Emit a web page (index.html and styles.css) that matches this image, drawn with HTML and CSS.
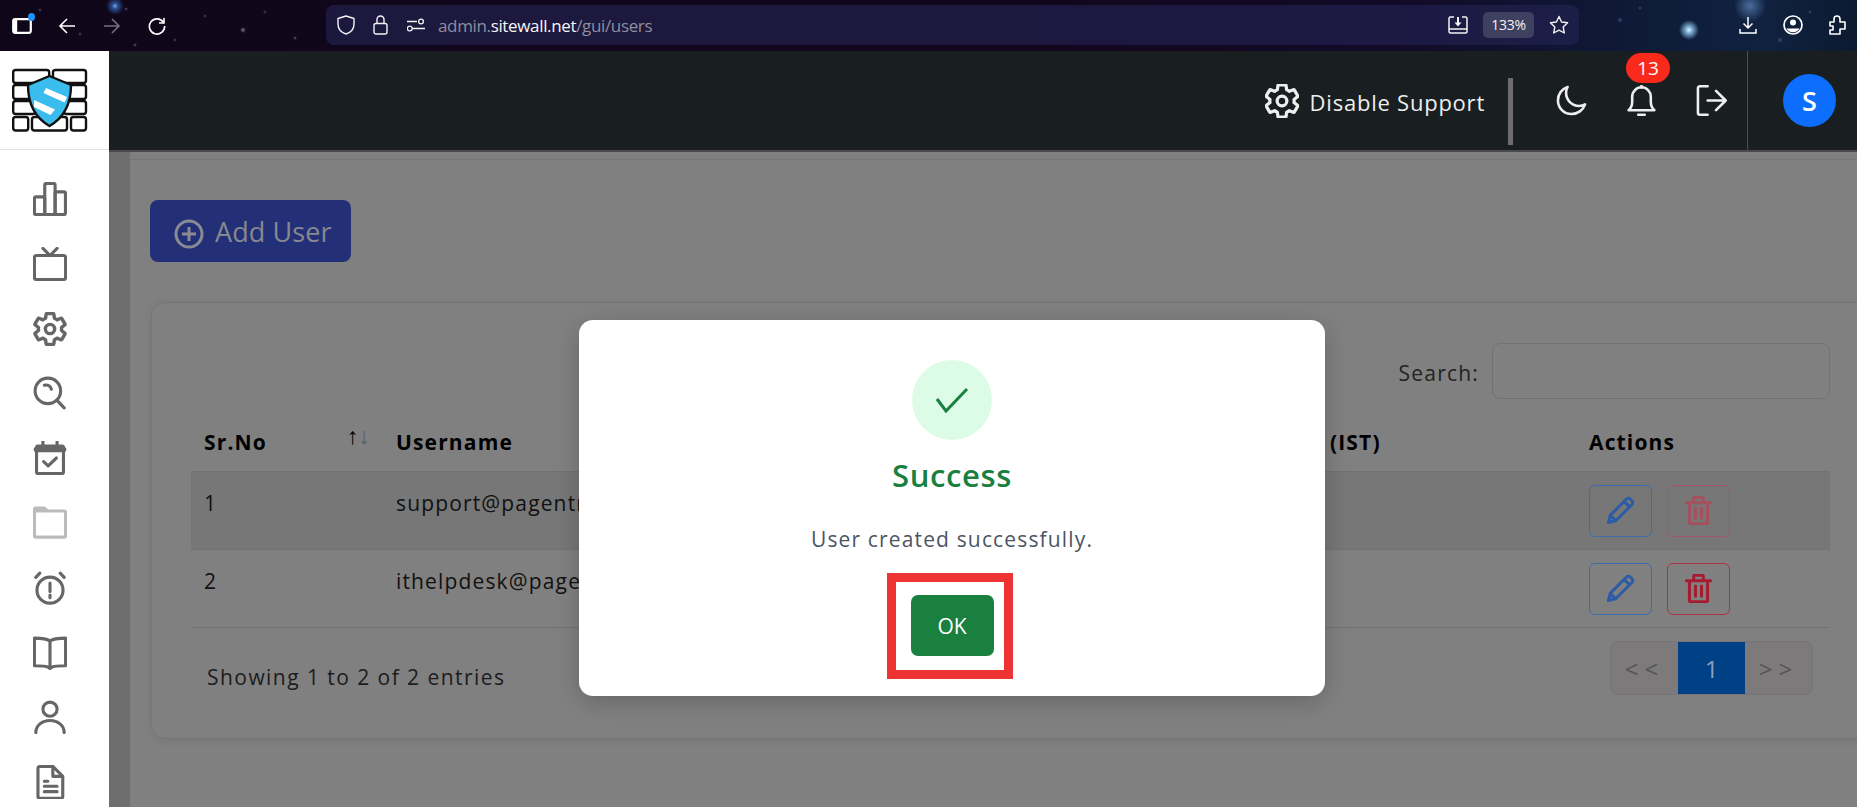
FILE: index.html
```html
<!DOCTYPE html>
<html lang="en">
<head>
  <meta charset="UTF-8" />
  <title>Users</title>
  <link rel="stylesheet" href="styles.css">
</head>
<body>
  <!-- Browser chrome -->
  <div class="chrome">
    <div class="tab-icon">
      <svg width="20" height="16" viewBox="0 0 20 16"><rect x="1.2" y="1.2" width="17.6" height="13.6" rx="2" fill="none" stroke="#fff" stroke-width="2.2"/><rect x="1.2" y="1.2" width="4" height="13.6" fill="#fff"/></svg>
      <span class="tab-dot"></span>
    </div>
    <svg class="nav-back" width="18" height="18" viewBox="0 0 18 18" fill="none" stroke="#fff" stroke-width="1.6"><path d="M17 9H2M9 2 2 9l7 7"/></svg>
    <svg class="nav-fwd" width="18" height="18" viewBox="0 0 18 18" fill="none" stroke="#76707c" stroke-width="1.6"><path d="M1 9h15M9 2l7 7-7 7"/></svg>
    <svg class="nav-reload" width="18" height="18" viewBox="0 0 18 18" fill="none" stroke="#fff" stroke-width="1.6"><path d="M15.5 5.5A7.6 7.6 0 1 0 16.600 9"/><path d="M16 1v5h-5" /></svg>

    <div class="urlbar">
      <svg width="18" height="20" viewBox="0 0 18 20" fill="none" stroke="#f2f2f2" stroke-width="1.4"><path d="M9 1 17 3.500V9c0 5-3.500 8.500-8 10C4.500 17.500 1 14 1 9V3.500z" stroke-linejoin="round"/></svg>
      <svg class="url-lock" width="15" height="20" viewBox="0 0 15 20" fill="none" stroke="#f2f2f2" stroke-width="1.4"><rect x="1" y="8.500" width="13" height="10.500" rx="2"/><path d="M4 8.500V4.500a3.500 3.500 0 0 1 7 0v4"/></svg>
      <svg class="url-tune" width="18" height="14" viewBox="0 0 18 14" fill="none" stroke="#f2f2f2" stroke-width="1.3"><path d="M0 3.500h10M5 10.500h13"/><circle cx="14" cy="3.500" r="2.400"/><circle cx="2.800" cy="10.500" r="2.400"/></svg>
      <div class="url-text">admin.<b>sitewall.net</b>/gui/users</div>
      <div class="url-right">
        <svg width="20" height="18" viewBox="0 0 20 18" fill="none" stroke="#f2f2f2" stroke-width="1.5"><path d="M6 1H2.500A1.500 1.500 0 0 0 1 2.500v13A1.500 1.500 0 0 0 2.500 17h15a1.500 1.500 0 0 0 1.500-1.500v-13A1.500 1.500 0 0 0 17.500 1H14M1 13h18"/><path d="M10 1v8" stroke-width="2"/><path d="M6.500 6.500h7L10 10.500z" fill="#f2f2f2" stroke="none"/></svg>
        <div class="zoom-pill">133%</div>
        <svg width="20" height="20" viewBox="0 0 20 20" fill="none" stroke="#f2f2f2" stroke-width="1.4" stroke-linejoin="round"><path d="m10 1.500 2.600 5.500 6 .8-4.400 4.200 1.100 6L10 15.100 4.700 18l1.100-6L1.400 7.800l6-.8z"/></svg>
      </div>
    </div>

    <div class="chrome-right">
      <svg width="18" height="18" viewBox="0 0 18 18" fill="none" stroke="#fff" stroke-width="1.5"><path d="M9 1v11M4.500 7.500 9 12l4.500-4.500M1 13v4h16v-4"/></svg>
      <svg width="20" height="20" viewBox="0 0 20 20" fill="none" stroke="#fff" stroke-width="1.700"><circle cx="10" cy="10" r="9"/><circle cx="10" cy="7.500" r="3" fill="#fff" stroke="none"/><path d="M3.500 13.500h13a7.500 7.500 0 0 1-13 0z" fill="#fff" stroke="none"/></svg>
      <svg width="17" height="20" viewBox="0 0 17 20" fill="none" stroke="#fff" stroke-width="1.600" stroke-linejoin="round"><path d="M1 7h4V4a3 3 0 0 1 6 0v3h5v7h-5v5H1v-4h3v-4H1z"/></svg>
    </div>
  </div>

  <div class="app">
    <!-- Sidebar -->
    <aside class="sidebar">
      <div class="logo">
        <svg width="76" height="64" viewBox="13 68 76 64" fill="#fff" stroke="#111" stroke-width="2.400">
          <rect x="14.200" y="70" width="36" height="13" rx="2.500"/>
          <rect x="54" y="70" width="33" height="13" rx="2.500"/>
          <rect x="14.200" y="85" width="17" height="14" rx="2.500"/>
          <rect x="69" y="85" width="18" height="14" rx="2.500"/>
          <rect x="14.200" y="101" width="22" height="13" rx="2.500"/>
          <rect x="65" y="101" width="22" height="13" rx="2.500"/>
          <rect x="14.200" y="117" width="15" height="13.500" rx="2.500"/>
          <rect x="33" y="117" width="35" height="13.500" rx="2.500"/>
          <rect x="72" y="117" width="15" height="13.500" rx="2.500"/>
          <path d="M50.500 76 72 85c0 18-6 32-21.500 41C35 117 29 103 29 85z" fill="#3bbcef" stroke-width="2.400"/>
          <path d="M47 88 68 97l-2.500 5.500L44.500 93zM35 100l21 9.500-4.500 5.500-16.500-8z" stroke="none"/>
        </svg>
      </div>
      <nav class="side-nav">
        <svg class="side-icon" viewBox="0 0 24 24"><rect x="1" y="10.500" width="7.300" height="12.500" rx="1"/><rect x="8.300" y="1" width="7.300" height="22" rx="1"/><rect x="15.600" y="7" width="7.300" height="16" rx="1"/></svg>
        <svg class="side-icon" viewBox="0 0 24 24"><rect x="1" y="6" width="22" height="17" rx="1.500"/><path d="M7 1l5 5 5-5"/></svg>
        <svg class="side-icon" viewBox="1 1 22 22"><path d="M19.430 12.980c.04-.32.07-.64.07-.98s-.03-.66-.07-.98l2.110-1.650c.19-.15.24-.42.12-.64l-2-3.460c-.12-.22-.39-.3-.61-.22l-2.490 1c-.52-.4-1.080-.73-1.690-.98l-.38-2.650C14.460 2.180 14.250 2 14 2h-4c-.25 0-.46.18-.49.42l-.38 2.650c-.61.25-1.170.59-1.690.98l-2.490-1c-.23-.09-.49 0-.61.22l-2 3.460c-.13.22-.07.49.12.64l2.110 1.650c-.04.32-.07.65-.07.98s.03.66.07.98l-2.110 1.650c-.19.15-.24.42-.12.64l2 3.460c.12.22.39.3.61.22l2.490-1c.52.4 1.080.73 1.690.98l.38 2.650c.03.24.24.42.49.42h4c.25 0 .46-.18.49-.42l.38-2.650c.61-.25 1.170-.59 1.690-.98l2.490 1c.23.09.49 0 .61-.22l2-3.460c.12-.22.07-.49-.12-.64z"/><circle cx="12" cy="12" r="3"/></svg>
        <svg class="side-icon" viewBox="0 0 24 24"><circle cx="10.500" cy="10.500" r="9"/><path d="M16.800 17 22 22.500M8 6.500c2.300-.6 4.300.6 5 2.800"/></svg>
        <svg class="side-icon" viewBox="0 0 24 24"><rect x="2.500" y="3.500" width="19" height="19.500" rx="1"/><path d="M2.500 6h19" stroke-width="4"/><path d="M7 0v4M17 0v4"/><path d="m7.500 14.500 3.200 3 5.800-5.500"/></svg>
        <svg class="side-icon is-muted" viewBox="0 0 24 24"><path d="M1 2.500a1 1 0 0 1 1-1h6l2 2h12a1 1 0 0 1 1 1V21a1 1 0 0 1-1 1H2a1 1 0 0 1-1-1z"/><path d="M1 3h8" stroke-width="3"/></svg>
        <svg class="side-icon" viewBox="0 0 24 24"><circle cx="12" cy="13.500" r="9.200"/><path d="M2 4.500 4.800 1.500M22 4.500l-2.800-3M12 8.500v6M12 17v1.800"/></svg>
        <svg class="side-icon" viewBox="0 0 24 24"><path d="M12 4v18.500M12 3.500c-2-1.500-6-2-11-2V21c4 0 8 0 10 1.200l1 .8 1-.8c2-1.200 6-1.200 10-1.200V1.500c-5 0-9 .5-11 2z"/></svg>
        <svg class="side-icon" viewBox="0 0 24 24"><circle cx="12" cy="6.500" r="5"/><path d="M2 23c0-5 4.500-8.500 10-8.500S22 18 22 23"/></svg>
        <svg class="side-icon" viewBox="0 0 24 24"><path d="M3.500 2.500A1.500 1.500 0 0 1 5 1h9l7 7v14a1.500 1.500 0 0 1-1.500 1.500H5A1.500 1.500 0 0 1 3.500 22z"/><path d="M14 1v7h7M8 11.500h2.500M8 15h9M8 18.800h9"/></svg>
      </nav>
    </aside>

    <div class="right-col">
      <!-- Top bar -->
      <header class="topbar">
        <svg class="top-gear" viewBox="1.500 1.500 21 21"><path d="M19.430 12.980c.04-.32.07-.64.07-.98s-.03-.66-.07-.98l2.110-1.650c.19-.15.24-.42.12-.64l-2-3.460c-.12-.22-.39-.3-.61-.22l-2.490 1c-.52-.4-1.080-.73-1.690-.98l-.38-2.650C14.460 2.180 14.250 2 14 2h-4c-.25 0-.46.18-.49.42l-.38 2.650c-.61.25-1.170.59-1.690.98l-2.490-1c-.23-.09-.49 0-.61.22l-2 3.460c-.13.22-.07.49.12.64l2.110 1.650c-.04.32-.07.65-.07.98s.03.66.07.98l-2.110 1.650c-.19.15-.24.42-.12.64l2 3.460c.12.22.39.3.61.22l2.490-1c.52.4 1.080.73 1.690.98l.38 2.650c.03.24.24.42.49.42h4c.25 0 .46-.18.49-.42l.38-2.650c.61-.25 1.170-.59 1.690-.98l2.490 1c.23.09.49 0 .61-.22l2-3.460c.12-.22.07-.49-.12-.64z"/><circle cx="12" cy="12" r="3"/></svg>
        <span class="support-text">Disable Support</span>
        <span class="top-sep"></span>
        <svg class="top-icon moon" viewBox="0 0 24 24"><path d="M9 1.500C4.500 3 1.500 7.200 1.500 12c0 5.800 4.700 10.500 10.500 10.500 4.800 0 9-3 10.500-7.500-1.500.9-3 1.200-4.500 1.200-5.800 0-10.200-4.500-10.200-10.200 0-1.500.3-3 1.200-4.500z"/></svg>
        <div class="bell-wrap">
          <svg class="top-icon" viewBox="0 0 24 24"><path d="M2 19.500c1.800-1.500 2.800-3.500 2.800-6.500V9a7.200 7.200 0 0 1 14.400 0v4c0 3 1 5 2.800 6.500z"/><path d="M12 .5v1.500M9.500 23h5" /></svg>
          <span class="badge">13</span>
        </div>
        <svg class="top-icon logout" viewBox="0 0 24 24"><path d="M9 1H3a1.500 1.500 0 0 0-1.500 1.500v19A1.500 1.500 0 0 0 3 23h6M9 12h14M15.500 4.500 23 12l-7.500 7.500"/></svg>
        <span class="top-vline"></span>
        <div class="avatar">S</div>
      </header>

      <!-- Main content -->
      <main class="content">
        <div class="panel">
          <button class="add-btn">
            <svg width="30" height="30" viewBox="0 0 30 30" fill="none" stroke="#8a8b92" stroke-width="3"><circle cx="15" cy="15" r="13"/><path d="M15 8v14M8 15h14"/></svg>
            Add User
          </button>

          <section class="card">
            <div class="search-row">
              <label class="search-label">Search:</label>
              <input class="search-input" type="text">
            </div>
            <table class="users">
              <colgroup><col class="c1"><col class="c2"><col class="c3"><col class="c4"></colgroup>
              <thead>
                <tr>
                  <th><div class="sort-cell">Sr.No <span class="sort"><span>↑</span><i>↓</i></span></div></th>
                  <th>Username</th>
                  <th>Created At (IST)</th>
                  <th>Actions</th>
                </tr>
              </thead>
              <tbody>
                <tr class="odd">
                  <td>1</td>
                  <td>support@pagentra.com</td>
                  <td></td>
                  <td class="actions">
                    <button class="act edit"><svg viewBox="0 0 24 24"><path d="M2 22l1.500-6L17 2.500a2.100 2.100 0 0 1 3 0l1.500 1.500a2.100 2.100 0 0 1 0 3L8 20.500zM3.500 16 8 20.500M15 4.500l4.500 4.500"/></svg></button>
                    <button class="act del faded"><svg viewBox="0 0 24 24"><path d="M2 5.500h20M8 5.500V2a1 1 0 0 1 1-1h6a1 1 0 0 1 1 1v3.500M4.500 5.500V22a1 1 0 0 0 1 1h13a1 1 0 0 0 1-1V5.500M9.500 10v8.500M14.500 10v8.500"/></svg></button>
                  </td>
                </tr>
                <tr>
                  <td>2</td>
                  <td>ithelpdesk@pagentra.com</td>
                  <td></td>
                  <td class="actions">
                    <button class="act edit"><svg viewBox="0 0 24 24"><path d="M2 22l1.500-6L17 2.500a2.100 2.100 0 0 1 3 0l1.500 1.500a2.100 2.100 0 0 1 0 3L8 20.500zM3.500 16 8 20.500M15 4.500l4.500 4.500"/></svg></button>
                    <button class="act del"><svg viewBox="0 0 24 24"><path d="M2 5.500h20M8 5.500V2a1 1 0 0 1 1-1h6a1 1 0 0 1 1 1v3.500M4.500 5.500V22a1 1 0 0 0 1 1h13a1 1 0 0 0 1-1V5.500M9.500 10v8.500M14.500 10v8.500"/></svg></button>
                  </td>
                </tr>
              </tbody>
            </table>
            <div class="table-foot">
              <div class="showing">Showing 1 to 2 of 2 entries</div>
              <div class="pager">
                <span class="page">&lt;&lt;</span>
                <span class="page current">1</span>
                <span class="page">&gt;&gt;</span>
              </div>
            </div>
          </section>
        </div>

        <!-- Success dialog -->
        <div class="dialog">
          <div class="ok-circle">
            <svg width="34" height="26" viewBox="0 0 34 26" fill="none" stroke="#198040" stroke-width="3"><path d="M2 12l9 12L32 2"/></svg>
          </div>
          <h2 class="dialog-title">Success</h2>
          <p class="dialog-text">User created successfully.</p>
          <button class="ok-btn">OK</button>
          <div class="red-mark"></div>
        </div>
      </main>
    </div>
  </div>
</body>
</html>
```

FILE: styles.css
```css
html, body { margin:0; padding:0; height:100%; }
body {
  display:flex;
  flex-direction:column;
  height:100vh;
  overflow:hidden;
  font-family:"Open Sans", "Noto Sans", sans-serif;
  color:#161616;
  background:#808080;
}

/* Browser chrome */
.chrome {
  position:relative;
  flex:0 0 51px;
  display:flex;
  align-items:center;
  box-sizing:border-box;
  padding-left:12px;
  background:
    radial-gradient(circle at 115px 6px, #6fa8ee 0, #2a4a8a 3px, transparent 9px),
    radial-gradient(circle at 243px 30px, #7a7488 0, transparent 3px),
    radial-gradient(circle at 126px 9px, #55506a 0, transparent 2px),
    radial-gradient(circle at 80px 34px, #4a4558 0, transparent 2px),
    radial-gradient(circle at 40px 10px, #4a4558 0, transparent 2px),
    radial-gradient(circle at 205px 16px, #4a4558 0, transparent 2px),
    radial-gradient(circle at 265px 12px, #4a4558 0, transparent 2px),
    radial-gradient(circle at 295px 38px, #5a5568 0, transparent 2px),
    radial-gradient(circle at 175px 40px, #4a4558 0, transparent 2px),
    radial-gradient(circle at 135px 45px, #5a5568 0, transparent 2px),
    radial-gradient(circle at 1689px 30px, #e8f4ff 0, #7fb4d8 3px, transparent 10px),
    radial-gradient(circle at 1750px 6px, #4a6c9c 0, transparent 16px),
    radial-gradient(circle at 1620px 20px, #3a4a6a 0, transparent 3px),
    radial-gradient(circle at 1640px 8px, #3a4a6a 0, transparent 2px),
    radial-gradient(circle at 1780px 40px, #3a4a6a 0, transparent 3px),
    radial-gradient(circle at 1810px 12px, #3a4a6a 0, transparent 2px),
    linear-gradient(90deg, #10061a 0, #12061c 55%, #120a28 75%, #0e1a38 88%, #102240 95%, #0c1a30 100%);
}
.tab-icon { position:relative; width:20px; height:16px; display:flex; }
.tab-dot {
  position:absolute;
  top:-5px; right:-3px;
  width:7px; height:8px;
  border-radius:50%;
  background:#1e90ff;
}
.nav-back { margin-left:26px; }
.nav-fwd { margin-left:27px; }
.nav-reload { margin-left:27px; }
.urlbar {
  flex:none;
  display:flex;
  align-items:center;
  box-sizing:border-box;
  width:1253px;
  height:40px;
  margin:0 0 1px 160px;
  padding-left:11px;
  border-radius:8px;
  background:rgba(36,36,84,.62);
}
.url-lock { margin-left:18px; }
.url-tune { margin-left:19px; }
.url-text {
  margin-left:13px;
  font-size:17px;
  letter-spacing:-.35px;
  color:#8f8e9e;
}
.url-text b { font-weight:400; color:#f5f5f5; }
.url-right {
  margin-left:auto;
  display:flex;
  align-items:center;
  padding-right:10px;
}
.zoom-pill {
  width:51px; height:26px;
  margin:0 15px;
  line-height:26px;
  text-align:center;
  font-size:14px;
  letter-spacing:-.3px;
  color:#f2f2f2;
  border-radius:5px;
  background:#3e4060;
}
.chrome-right {
  position:absolute;
  top:15px; right:11px;
  display:flex;
  align-items:center;
  gap:26px;
}

/* App frame */
.app { flex:1; display:flex; min-height:0; }
.sidebar { flex:0 0 109px; background:#fff; overflow:hidden; }
.logo {
  height:99px;
  box-sizing:border-box;
  padding:17px 0 0 12px;
  border-bottom:1px solid #e2e2e2;
}
.logo svg { display:block; }
.side-nav {
  display:flex;
  flex-direction:column;
  padding:32px 0 0 33px;
  gap:30.800px;
}
.side-icon {
  flex:none;
  width:34px; height:34px;
  fill:none;
  stroke:#666;
  stroke-width:2.200;
  stroke-linejoin:round;
  stroke-linecap:round;
}
.side-icon.is-muted { stroke:#bbb; }
.right-col { flex:1; min-width:0; display:flex; flex-direction:column; }

/* Top bar */
.topbar {
  flex:0 0 100px;
  box-sizing:border-box;
  display:flex;
  align-items:center;
  justify-content:flex-end;
  padding-right:21px;
  background:#191e20;
  border-bottom:2px solid #4a4a4a;
  color:#eee;
}
.top-gear, .top-icon {
  flex:none;
  fill:none;
  stroke:#eee;
  stroke-width:2;
  stroke-linejoin:round;
  stroke-linecap:round;
}
.top-gear { width:34px; height:34px; margin-right:11px; }
.top-icon { width:31px; height:31px; display:block; }
.support-text { margin-top:2px; font-size:22px; letter-spacing:.77px; white-space:nowrap; }
.top-sep {
  align-self:flex-end;
  width:5px; height:67px;
  margin:0 43px 5px 23px;
  background:#6d6d6d;
}
.bell-wrap { position:relative; margin:0 39px 0 39px; }
.badge {
  position:absolute;
  top:-32px; left:0;
  width:44px; height:30px;
  line-height:30px;
  text-align:center;
  font-size:19px;
  color:#fff;
  border-radius:15px;
  background:#f92a1c;
}
.top-vline { width:1px; height:99px; margin:0 35px 0 20px; background:#4a4f51; }
.avatar {
  width:53px; height:53px;
  line-height:53px;
  text-align:center;
  font-size:27px;
  font-weight:600;
  color:#fff;
  border-radius:50%;
  background:#0d6efd;
}

/* Content */
.content {
  position:relative;
  flex:1;
  min-height:0;
  overflow:hidden;
  background:linear-gradient(90deg, #6e6e6e 21px, #808080 21px);
  padding-left:21px;
}
.panel {
  height:100%;
  margin-top:7px;
  box-sizing:border-box;
  padding:40px 0 0 20px;
  border-top:1px solid #757575;
}
.add-btn {
  display:flex;
  align-items:center;
  gap:11px;
  width:201px; height:62px;
  padding:1px 0 0 24px;
  box-sizing:border-box;
  border:none;
  border-radius:8px;
  font:inherit;
  font-size:27px;
  letter-spacing:.1px;
  color:#87888f;
  background:#233078;
}
.add-btn svg { margin-top:4px; flex:none; }
.card {
  box-sizing:border-box;
  width:1760px;
  height:437px;
  margin:40px 0 0 1px;
  padding:40px 0 0 39px;
  border:1px solid #757575;
  border-radius:14px;
  box-shadow:0 2px 8px rgba(0,0,0,.08);
}
.search-row {
  display:flex;
  align-items:center;
  justify-content:flex-end;
  gap:13px;
  width:1639px;
  height:56px;
}
.search-label { font-size:21px; letter-spacing:1.2px; color:#222; padding-top:3px; }
.search-input {
  box-sizing:border-box;
  width:338px; height:56px;
  border:1px solid #727272;
  border-radius:8px;
  background:transparent;
}
.users {
  width:1639px;
  margin-top:11px;
  table-layout:fixed;
  border-collapse:collapse;
  font-size:21px;
  letter-spacing:1.15px;
}
.c1 { width:192px; }
.c2 { width:804px; }
.c3 { width:389px; }
.c4 { width:254px; }
.users th {
  height:61px;
  padding:4px 13px 0;
  box-sizing:border-box;
  text-align:left;
  font-size:21px;
  font-weight:700;
  color:#000;
  border-bottom:1px solid #727272;
  white-space:nowrap;
}
.sort-cell { display:flex; align-items:center; justify-content:space-between; }
.sort {
  display:flex;
  margin-top:-11px;
  font-family:"Liberation Sans", sans-serif;
  font-size:23px;
  font-weight:400;
  letter-spacing:0;
}
.sort span { color:#000; }
.sort i { font-style:normal; color:#5c5f62; }
.users td {
  height:78px;
  box-sizing:border-box;
  padding:17px 13px 0;
  vertical-align:top;
  color:#111;
  border-bottom:1px solid #727272;
  white-space:nowrap;
  overflow:hidden;
}
.users tr.odd td { background:#777; }
.users td.actions { padding-top:13px; font-size:0; }
.act {
  display:inline-flex;
  align-items:center;
  justify-content:center;
  box-sizing:border-box;
  width:63px; height:52px;
  margin-right:14px;
  padding:0;
  border:1px solid;
  border-radius:6px;
  background:transparent;
}
.act svg { width:29px; height:29px; fill:none; stroke-width:2.500; stroke-linejoin:round; stroke-linecap:round; }
.edit { border-color:#3d6cae; }
.edit svg { stroke:#2d5ca6; }
.del { border-color:#ad3049; }
.del svg { stroke:#a51c30; }
.del.faded { border-color:#a5566a; }
.del.faded svg { stroke:#a5505f; }
.table-foot {
  display:flex;
  justify-content:space-between;
  width:1639px;
  box-sizing:border-box;
  padding:13px 17px 0 16px;
}
.showing { margin-top:22px; font-size:21px; letter-spacing:1.45px; color:#1c1c1c; }
.pager {
  display:flex;
  height:54px;
  border:1px solid #757373;
  border-radius:8px;
  background:#7c7a7b;
  box-sizing:border-box;
  overflow:hidden;
}
.page {
  width:67px;
  line-height:54px;
  text-align:center;
  font-size:24px;
  letter-spacing:6px;
  color:#555;
}
.page.current { color:#8aa0bc; background:#004085; letter-spacing:0; }

/* Dialog */
.dialog {
  position:absolute;
  top:168px; left:470px;
  box-sizing:border-box;
  display:flex;
  flex-direction:column;
  align-items:center;
  width:746px; height:376px;
  padding-top:40px;
  border-radius:14px;
  background:#fff;
  box-shadow:0 6px 24px rgba(0,0,0,.2);
}
.ok-circle {
  display:flex;
  align-items:center;
  justify-content:center;
  width:80px; height:80px;
  border-radius:50%;
  background:#dcfce7;
}
.dialog-title {
  margin:16px 0 0;
  line-height:38px;
  font-size:31px;
  font-weight:600;
  letter-spacing:.6px;
  color:#198040;
}
.dialog-text {
  margin:28px 0 0;
  line-height:34px;
  font-size:21px;
  letter-spacing:1.15px;
  color:#4b5563;
}
.ok-btn {
  width:83px; height:61px;
  margin-top:39px;
  border:none;
  border-radius:7px;
  font:inherit;
  font-size:21px;
  color:#fff;
  background:#198040;
}
.red-mark {
  position:absolute;
  top:253px; left:308px;
  width:126px; height:106px;
  box-sizing:border-box;
  border:9px solid #ee3333;
}
```
